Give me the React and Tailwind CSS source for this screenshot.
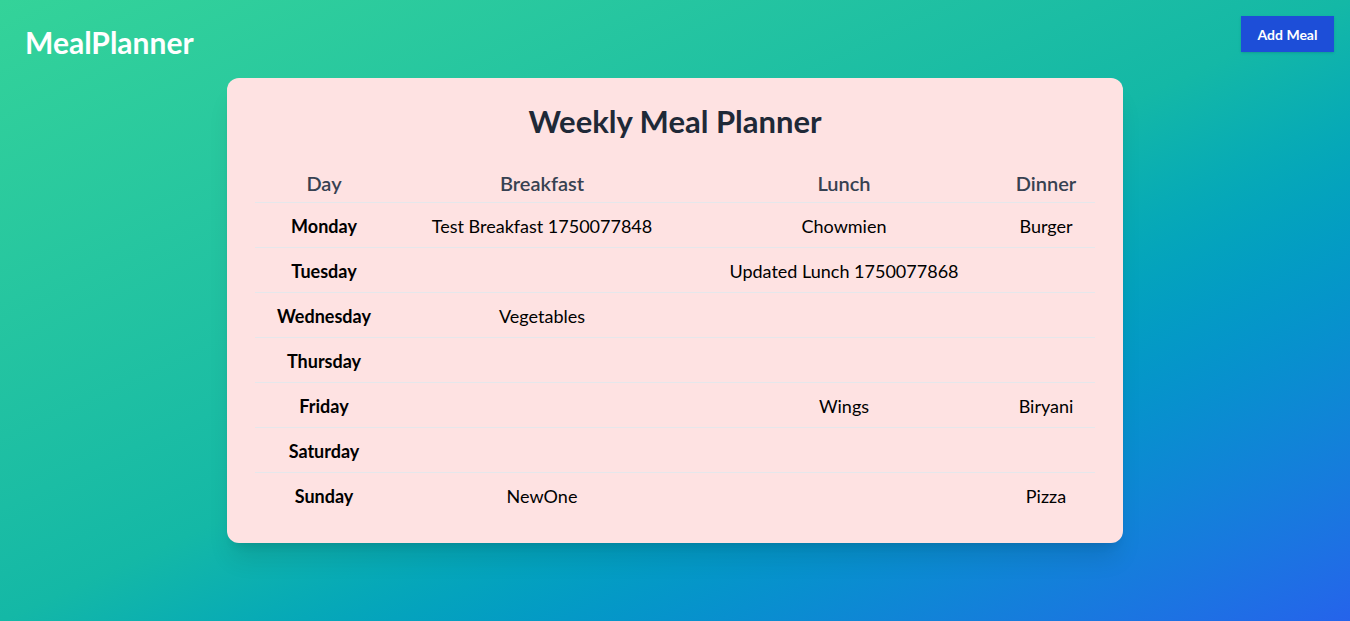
const DAYS = [
  { day: 'Monday', breakfast: 'Test Breakfast 1750077848', lunch: 'Chowmien', dinner: 'Burger' },
  { day: 'Tuesday', breakfast: '', lunch: 'Updated Lunch 1750077868', dinner: '' },
  { day: 'Wednesday', breakfast: 'Vegetables', lunch: '', dinner: '' },
  { day: 'Thursday', breakfast: '', lunch: '', dinner: '' },
  { day: 'Friday', breakfast: '', lunch: 'Wings', dinner: 'Biryani' },
  { day: 'Saturday', breakfast: '', lunch: '', dinner: '' },
  { day: 'Sunday', breakfast: 'NewOne', lunch: '', dinner: 'Pizza' },
];

const HEAD = ['Day', 'Breakfast', 'Lunch', 'Dinner'];

export default function App() {
  return (
    <div
      className="min-h-screen bg-gradient-to-br from-[#34d399] via-[#14b8a6] to-[#2563eb]"
      style={{ fontFamily: 'Lato, "Noto Sans", sans-serif' }}
    >
      <header className="flex items-start justify-between pl-[25px] pr-4 pt-4">
        <h1 className="mt-[8px] text-[30px] font-bold leading-9 text-white">MealPlanner</h1>
        <button className="h-9 w-[93px] bg-[#1d4ed8] text-[14px] font-bold text-white shadow">Add Meal</button>
      </header>

      <main className="flex justify-center pt-[18px]">
        <div className="w-[896px] rounded-xl bg-[#fee2e2] px-7 pb-[26px] pt-[25px] shadow-xl">
          <h2 className="mb-[19px] text-center text-[31px] font-bold leading-9 text-[#1f2937]">
            Weekly Meal Planner
          </h2>
          <table className="w-full text-center text-lg">
            <colgroup>
              <col className="w-[138px]" />
              <col className="w-[298px]" />
              <col className="w-[306px]" />
              <col />
            </colgroup>
            <thead>
              <tr className="border-b border-[#e5e7eb]">
                {HEAD.map((h) => (
                  <th key={h} className="px-4 pb-[5px] pt-[11px] text-xl font-semibold text-[#374151]">
                    {h}
                  </th>
                ))}
              </tr>
            </thead>
            <tbody>
              {DAYS.map((d, i) => (
                <tr key={d.day} className={i < DAYS.length - 1 ? 'border-b border-[#e5e7eb]' : ''}>
                  <td className="px-4 pb-[7px] pt-[9px] font-bold text-black">{d.day}</td>
                  <td className="px-4 pb-[7px] pt-[9px] text-black">{d.breakfast}</td>
                  <td className="px-4 pb-[7px] pt-[9px] text-black">{d.lunch}</td>
                  <td className="px-4 pb-[7px] pt-[9px] text-black">{d.dinner}</td>
                </tr>
              ))}
            </tbody>
          </table>
        </div>
      </main>
    </div>
  );
}
